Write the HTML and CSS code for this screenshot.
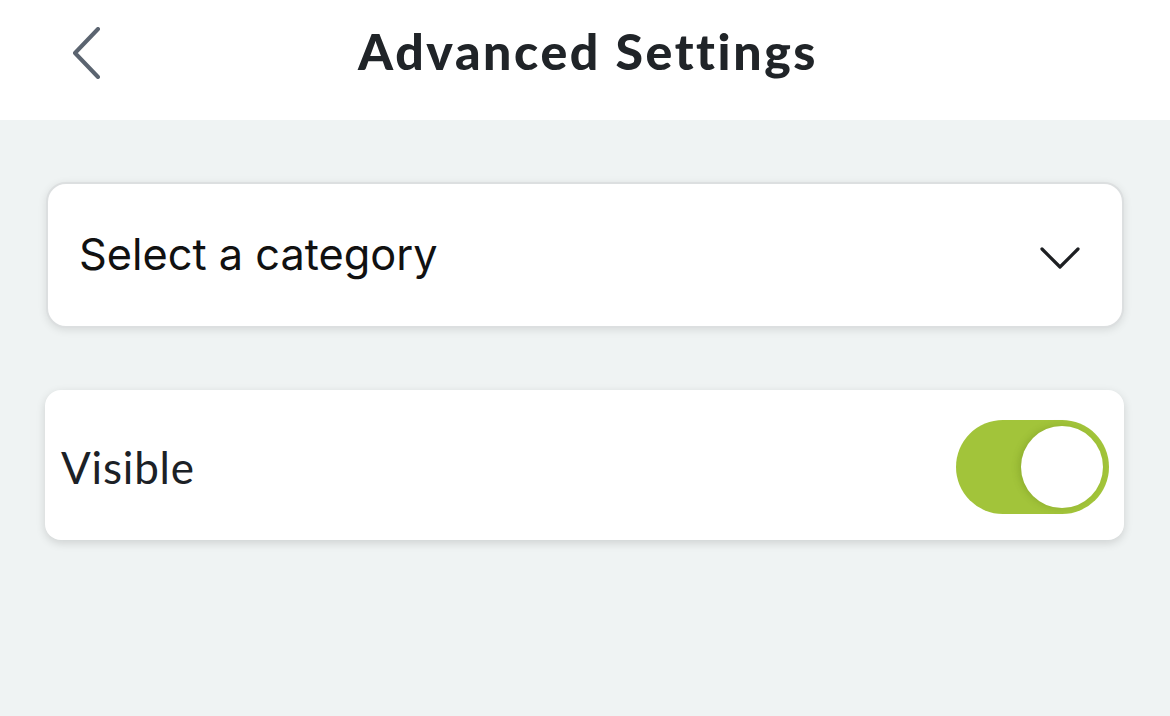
FILE: index.html
```html
<!DOCTYPE html>
<html>
<head>
<meta charset="utf-8">
<link rel="stylesheet" href="styles.css">
</head>
<body>
<header class="topbar">
  <button class="back" aria-label="Back">
    <svg width="32" height="52" viewBox="0 0 32 52"><path d="M28 2 L5 26 L28 50" fill="none" stroke="#5b6470" stroke-width="4" stroke-linecap="round" stroke-linejoin="round"/></svg>
  </button>
  <h1 class="title">Advanced Settings</h1>
</header>
<main class="content">
  <div class="card select">
    <span class="select-label">Select a category</span>
    <svg class="chev" width="40" height="24" viewBox="0 0 40 24"><path d="M2 3 L20 21 L38 3" fill="none" stroke="#1d1f22" stroke-width="3.2" stroke-linecap="round" stroke-linejoin="round"/></svg>
  </div>
  <div class="card row">
    <span class="row-label">Visible</span>
    <div class="toggle"><div class="knob"></div></div>
  </div>
</main>
</body>
</html>
```
FILE: styles.css
```css
* { box-sizing: border-box; }
html, body { margin: 0; padding: 0; }
body {
  width: 1170px;
  height: 716px;
  background: #eff3f3;
  font-family: "Lato", "Liberation Sans", sans-serif;
  overflow: hidden;
}
.topbar {
  height: 120px;
  background: #ffffff;
  display: flex;
  align-items: center;
  justify-content: center;
  position: relative;
}
.back {
  position: absolute;
  left: 70px;
  top: 27px;
  background: none;
  border: 0;
  padding: 0;
  display: block;
}
.back svg { display: block; }
.title {
  margin: 0;
  margin-top: -18px;
  margin-left: 6px;
  font-family: "Lato", sans-serif;
  font-weight: 900;
  font-size: 50px;
  color: #202428;
  letter-spacing: 2.6px;
}
.content {
  padding: 62px 46px 0 45px;
  display: flex;
  flex-direction: column;
  gap: 62px;
}
.card {
  background: #fff;
  display: flex;
  align-items: center;
  justify-content: space-between;
}
.select {
  margin-left: 1px;
  height: 146px;
  border: 2px solid #dcdfe0;
  border-radius: 20px;
  box-shadow: 0 2px 8px rgba(0,0,0,0.10);
  padding: 0 42px 0 31px;
}
.select-label {
  font-family: "Inter", "Liberation Sans", sans-serif;
  font-size: 43.3px;
  color: #111;
  margin-top: -3px;
}
.chev { display: block; margin-top: 6px; }
.row {
  height: 150px;
  border-radius: 16px;
  box-shadow: 0 3px 10px rgba(0,0,0,0.14);
  padding: 0 15px 0 16px;
}
.row-label {
  font-family: "Lato", sans-serif;
  font-size: 44px;
  color: #1c2126;
  letter-spacing: 0.8px;
  margin-top: 4px;
}
.toggle {
  width: 153px;
  height: 94px;
  border-radius: 47px;
  background: #a2c43a;
  display: flex;
  align-items: center;
  justify-content: flex-end;
  padding-right: 6px;
  margin-top: 4px;
}
.knob {
  width: 82px;
  height: 82px;
  border-radius: 50%;
  background: #fff;
  box-shadow: -3px 0 6px rgba(90,120,20,0.25);
}
```
